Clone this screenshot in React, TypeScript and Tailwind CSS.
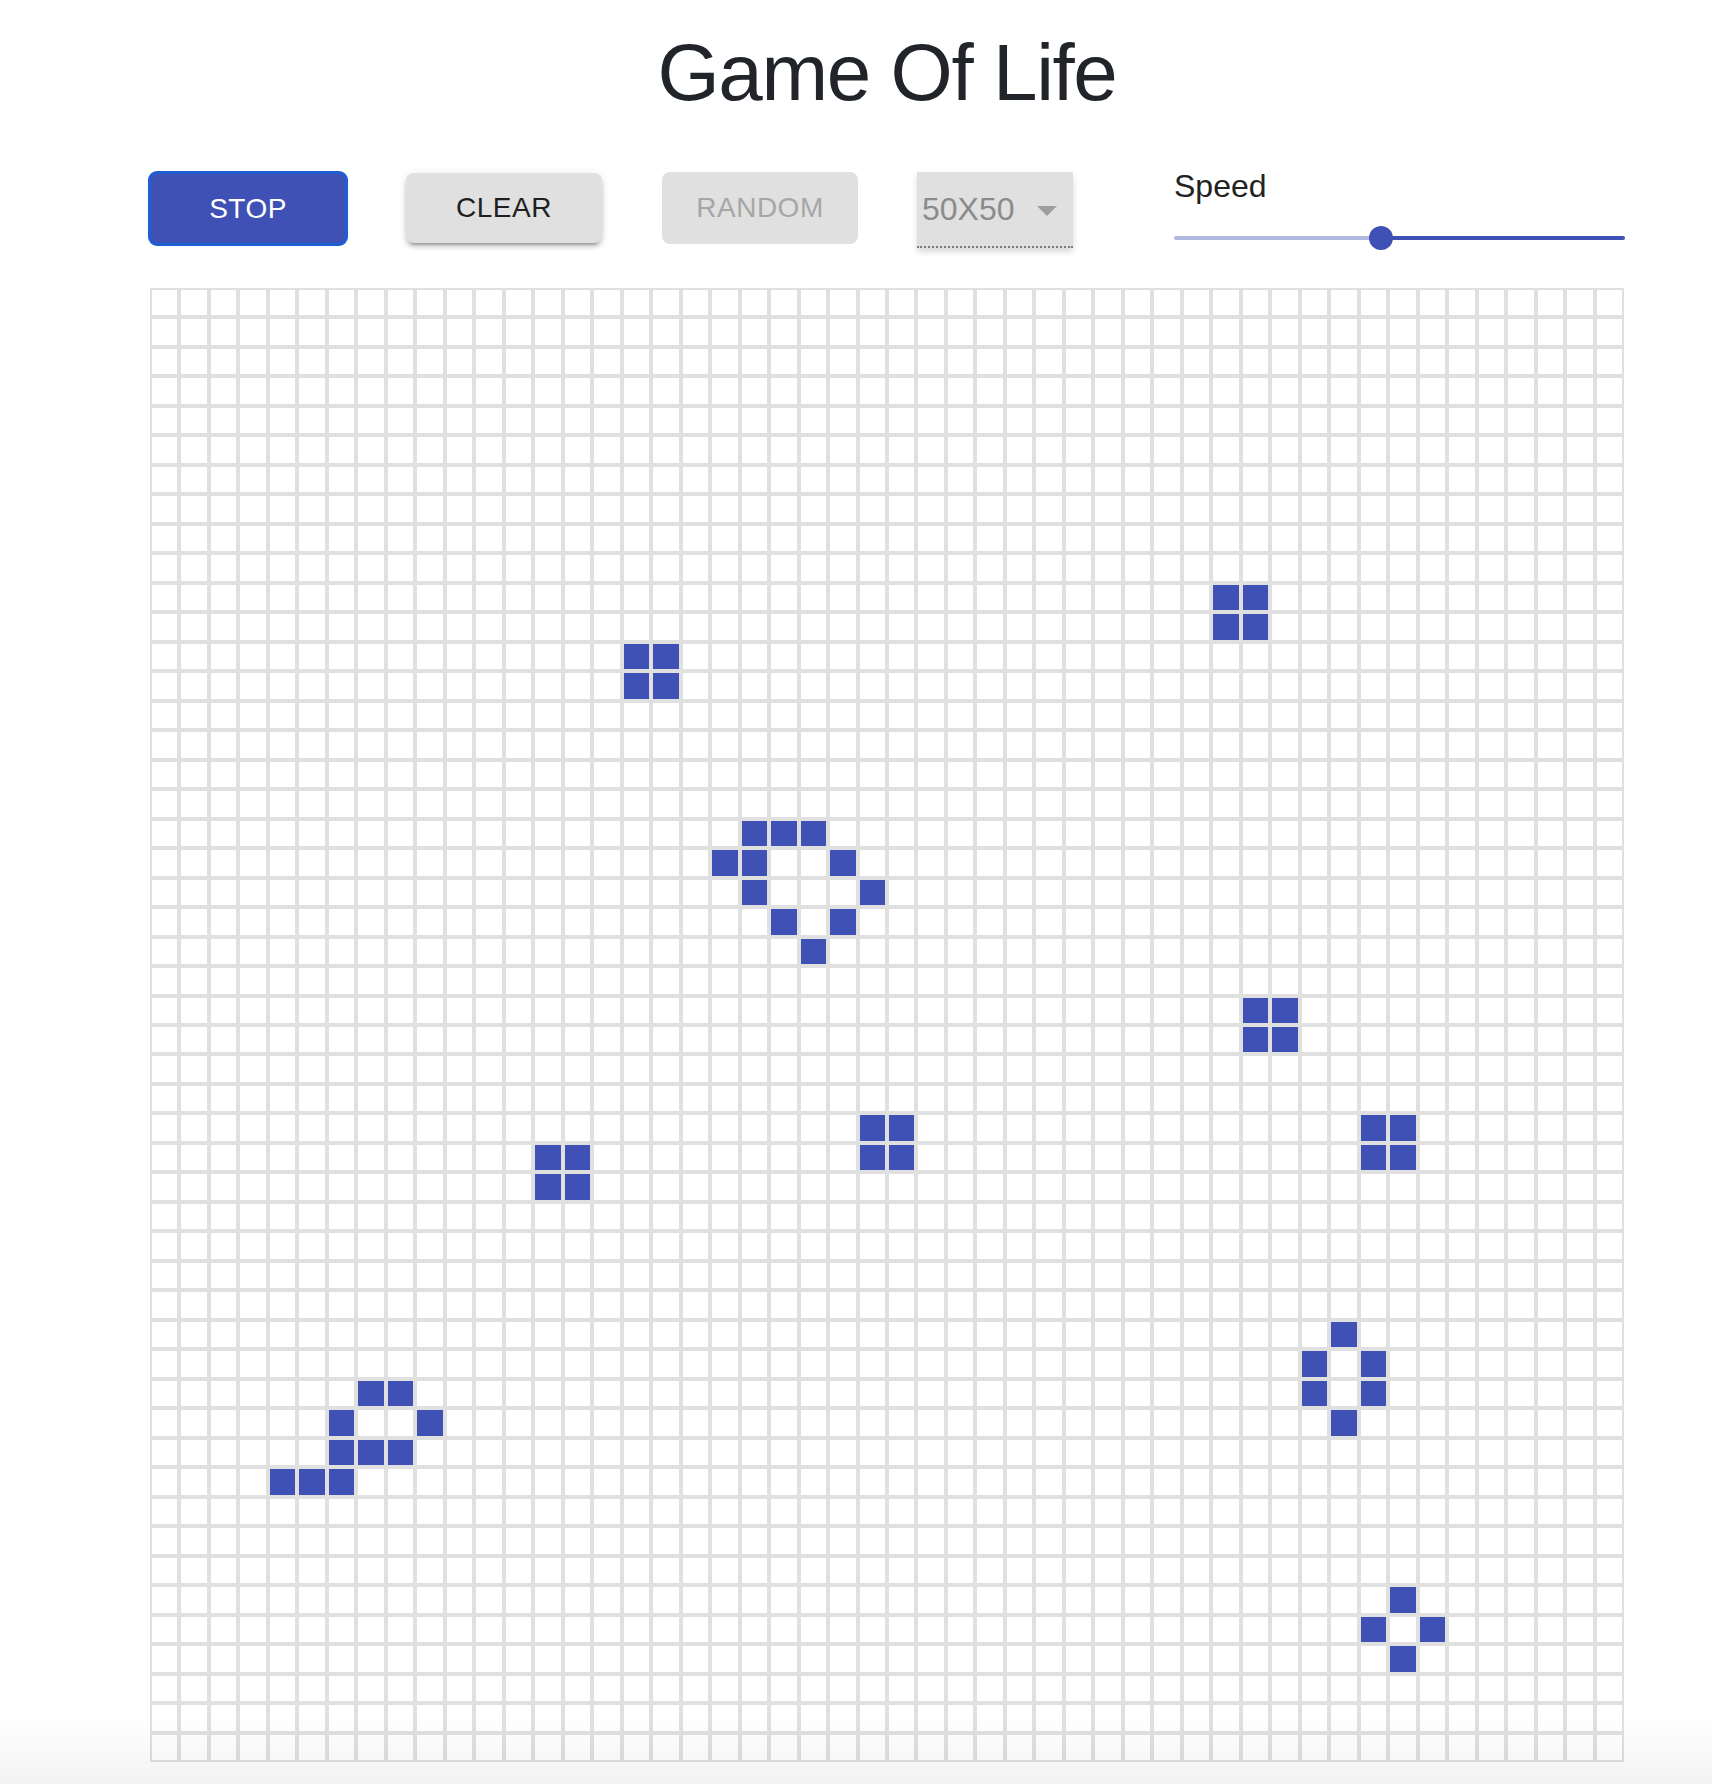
const SIZE = 50;

// live cells as [row, col]
const LIVE: [number, number][] = [
  [10, 36], [10, 37], [11, 36], [11, 37],
  [12, 16], [12, 17], [13, 16], [13, 17],
  [18, 20], [18, 21], [18, 22],
  [19, 19], [19, 20], [19, 23],
  [20, 20], [20, 24],
  [21, 21], [21, 23],
  [22, 22],
  [24, 37], [24, 38], [25, 37], [25, 38],
  [28, 24], [28, 25], [29, 24], [29, 25],
  [28, 41], [28, 42], [29, 41], [29, 42],
  [29, 13], [29, 14], [30, 13], [30, 14],
  [35, 40], [36, 39], [36, 41], [37, 39], [37, 41], [38, 40],
  [37, 7], [37, 8], [38, 6], [38, 9], [39, 6], [39, 7], [39, 8], [40, 4], [40, 5], [40, 6],
  [44, 42], [45, 41], [45, 43], [46, 42],
];

const alive = new Set(LIVE.map(([r, c]) => `${r},${c}`));

function Board() {
  const cells = [];
  for (let r = 0; r < SIZE; r++) {
    for (let c = 0; c < SIZE; c++) {
      const on = alive.has(`${r},${c}`);
      cells.push(
        <div
          key={`${r}-${c}`}
          className={`border-2 border-[#e0e0e0] ${on ? 'bg-[#3f51b5]' : 'bg-white'}`}
        />
      );
    }
  }
  return (
    <div className="grid grid-cols-[repeat(50,minmax(0,1fr))] grid-rows-[repeat(50,minmax(0,1fr))] w-[1474px] h-[1474px]">
      {cells}
    </div>
  );
}

function SpeedSlider() {
  return (
    <div className="flex flex-col w-[451px]">
      <span className="text-[32px] leading-none text-[#222]">Speed</span>
      <div className="relative mt-[24px] h-[24px] flex items-center">
        <div className="h-[4px] w-[46%] bg-[#b2b9e1] rounded-l-full" />
        <div className="h-[4px] flex-1 bg-[#3f51b5] rounded-r-full" />
        <div className="absolute left-[46%] top-0 -ml-[12px] w-[24px] h-[24px] rounded-full bg-[#3f51b5]" />
      </div>
    </div>
  );
}

export default function App() {
  return (
    <div className="relative min-h-[1784px] overflow-hidden bg-white font-['Liberation_Sans',Arial,sans-serif]">
      <div className="ml-[150px] w-[1474px] pb-[21px]">
        <h1 className="pt-[33px] text-center text-[80px] leading-none tracking-[-1.4px] text-[#212529]">
          Game Of Life
        </h1>

        <div className="mt-[58px] flex items-start h-[76px]">
          <button className="shrink-0 -ml-[2px] w-[200px] h-[75px] rounded-[9px] border-[3px] border-[#1e5fd2] bg-[#3f51b5] text-white text-[28px] tracking-[0.5px]">
            STOP
          </button>
          <button className="shrink-0 ml-[58px] mt-[2px] w-[196px] h-[70px] rounded-[8px] bg-[#e0e0e0] text-[#1f1f1f] text-[28px] tracking-[0.5px] shadow-[0_6px_2px_-4px_rgba(0,0,0,0.2),0_4px_4px_0_rgba(0,0,0,0.14),0_2px_10px_0_rgba(0,0,0,0.12)]">
            CLEAR
          </button>
          <button className="shrink-0 ml-[60px] mt-[1px] w-[196px] h-[72px] rounded-[8px] bg-[#e0e0e0] text-[#a6a6a6] text-[28px] tracking-[0.5px]">
            RANDOM
          </button>
          <div className="shrink-0 ml-[59px] mt-[1px] w-[156px] h-[76px] bg-[#e0e0e0] border-b-[2px] border-dotted border-[#7a7a7a] flex items-center pl-[5px] shadow-[0_4px_6px_rgba(0,0,0,0.15)]">
            <span className="text-[32px] text-[#8b8b8b] leading-none">50X50</span>
            <svg width="20" height="10" viewBox="0 0 20 10" className="ml-[22px] mt-[4px]">
              <path d="M0 0 L20 0 L10 10 Z" fill="#9e9e9e" />
            </svg>
          </div>
          <div className="shrink-0 ml-[101px] -mt-[1px]">
            <SpeedSlider />
          </div>
        </div>

        <div className="mt-[41px]">
          <Board />
        </div>
      </div>
      <div className="pointer-events-none absolute bottom-0 left-0 right-0 h-[68px] bg-gradient-to-b from-transparent to-black/5" />
    </div>
  );
}
